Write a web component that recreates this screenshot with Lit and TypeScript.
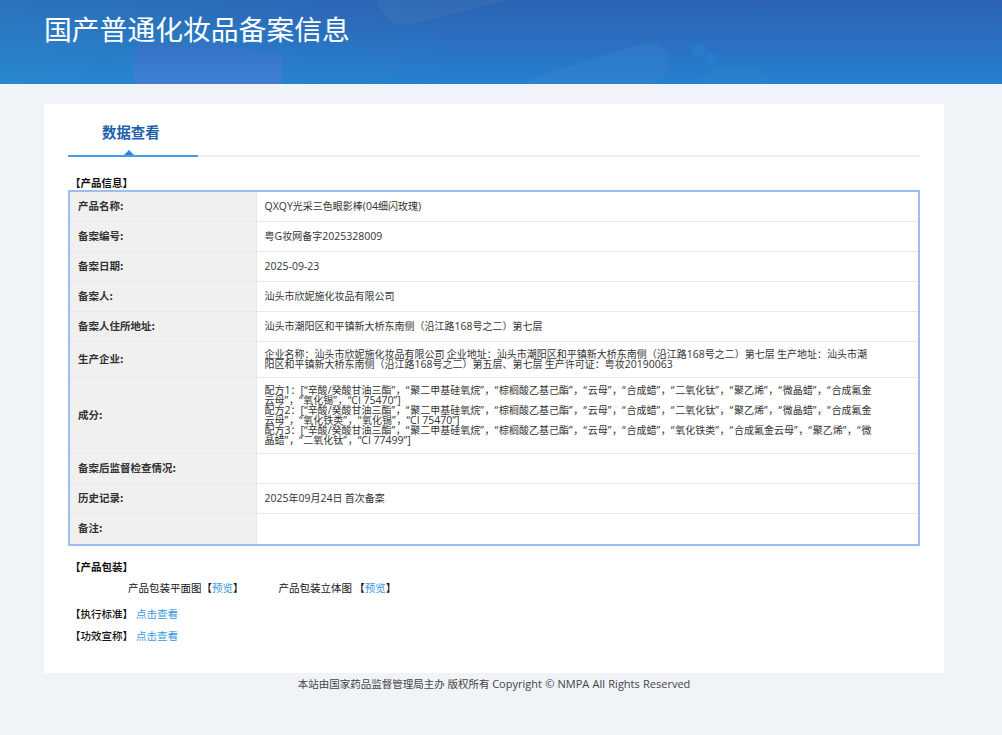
import { css, html, LitElement } from "lit";
import { customElement } from "lit/decorators.js";

// latin runs get their own slightly larger face, the way the page mixes fonts
const mix = (text: string) =>
	text
		.split(/([\x21-\x7e©“”](?:[\x20-\x7e©“”]*[\x21-\x7e©“”])?)/)
		.map((part, i) =>
			i % 2
				? html`<span class="en ${/^[“”]$/.test(part) ? "quote" : ""}">${part}</span>`
				: part,
		);

const formula = (n: number, items: string[]) =>
	`配方${n}\uff1a[${items.map((item) => `“${item}”`).join("\uff0c")}]`;

const base = ["辛酸/癸酸甘油三酯", "聚二甲基硅氧烷", "棕榈酸乙基己酯", "云母", "合成蜡"];

const road = "汕头市潮阳区和平镇新大桥东南侧\uff08沿江路168号之二\uff09";

const rows: { label: string; value: unknown; cls?: string }[] = [
	{ label: "产品名称:", value: mix("QXQY光采三色眼影棒(04细闪玫瑰)") },
	{ label: "备案编号:", value: mix("粤G妆网备字2025328009") },
	{ label: "备案日期:", value: mix("2025-09-23") },
	{ label: "备案人:", value: "汕头市欣妮施化妆品有限公司" },
	{ label: "备案人住所地址:", value: mix(`${road}第七层`) },
	{
		label: "生产企业:",
		cls: "tall",
		value: mix(
			`企业名称\uff1a汕头市欣妮施化妆品有限公司 企业地址\uff1a${road}第七层 生产地址\uff1a${road}第五层、第七层 生产许可证\uff1a粤妆20190063`,
		),
	},
	{
		label: "成分:",
		cls: "tall",
		value: html`${mix(
				formula(1, [...base, "二氧化钛", "聚乙烯", "微晶蜡", "合成氟金云母", "氧化锡", "CI 75470"]),
			)}<br />${mix(
				formula(2, [...base, "二氧化钛", "聚乙烯", "微晶蜡", "合成氟金云母", "氧化铁类", "氧化锡", "CI 75470"]),
			)}<br />${mix(
				formula(3, [...base, "氧化铁类", "合成氟金云母", "聚乙烯", "微晶蜡", "二氧化钛", "CI 77499"]),
			)}`,
	},
	{ label: "备案后监督检查情况:", value: "" },
	{ label: "历史记录:", value: mix("2025年09月24日 首次备案") },
	{ label: "备注:", value: "" },
];

@customElement("app-root")
export class AppRoot extends LitElement {
	static override styles = css`
		:host {
			display: block;
			min-height: 735px;
			background: #f0f3f7;
			font-family: "Noto Sans CJK SC", "Open Sans", sans-serif;
			font-size: 10px;
			color: #333;
		}

		.en {
			font-family: "Open Sans", "Noto Sans CJK SC", sans-serif;
			font-size: 10.5px;
		}

		.quote {
			letter-spacing: 0.7px;
		}

		td .en {
			line-height: 0;
		}

		.banner {
			position: relative;
			height: 84px;
			overflow: hidden;
			background:
				linear-gradient(to right, rgba(38, 150, 205, 0.35), rgba(38, 150, 205, 0) 45%),
				linear-gradient(to bottom, #2c61b2, #287fd0);
		}

		.banner h1 {
			position: relative;
			margin: 0;
			padding: 11px 0 0 44px;
			font-size: 27.8px;
			line-height: 34px;
			font-weight: 400;
			color: #fff;
		}

		.shape {
			position: absolute;
		}

		.shape.block {
			left: 134px;
			top: 43px;
			width: 148px;
			height: 41px;
			background: linear-gradient(to bottom, #3473c4, #3c80d6);
			clip-path: polygon(0 0, 55% 0, 100% 30%, 100% 100%, 0 100%);
		}

		.shape.pill {
			left: 375px;
			top: -46px;
			width: 150px;
			height: 60px;
			border-radius: 30px;
			background: rgba(80, 140, 190, 0.2);
			transform: rotate(-14deg);
		}

		.shape.wave {
			left: 521px;
			top: 59px;
			width: 150px;
			height: 40px;
			border-radius: 20px;
			background: rgba(70, 150, 220, 0.18);
			transform: rotate(-17deg);
		}

		.shape.glow {
			left: 696px;
			top: 67px;
			width: 78px;
			height: 40px;
			border-radius: 50%;
			background: rgba(70, 150, 220, 0.07);
		}

		.shape.dot {
			left: 692px;
			top: 44px;
			width: 13px;
			height: 13px;
			border-radius: 50%;
			background: rgba(50, 140, 225, 0.3);
		}

		.shape.dot.small {
			left: 706px;
			top: 53px;
			width: 9px;
			height: 9px;
			background: rgba(40, 130, 225, 0.5);
		}

		.card {
			width: 852px;
			height: 569px;
			margin: 20px 0 0 44px;
			padding: 0 24px;
			background: #fff;
		}

		.tabs {
			position: relative;
			height: 51px;
			border-bottom: 2px solid #ebedf0;
		}

		.tab {
			position: absolute;
			left: 0;
			bottom: -2px;
			box-sizing: border-box;
			width: 130px;
			height: 53px;
			padding: 19px 0 0 34px;
			border-bottom: 2px solid #439ce4;
			font-size: 14.4px;
			line-height: 18px;
			font-weight: 700;
			color: #1d62a8;
		}

		.tab::after {
			content: "";
			position: absolute;
			left: 56px;
			bottom: 0;
			border: 5px solid transparent;
			border-top: 0;
			border-bottom-color: #2a86d6;
		}

		.heading {
			margin: 0;
			padding-left: 2px;
			font-size: 10.5px;
			line-height: 12px;
			font-weight: 700;
			color: #111;
		}

		.first {
			margin-top: 20px;
		}

		table {
			box-sizing: border-box;
			width: 852px;
			margin-top: 1px;
			border: 2px solid #9dbfee;
			border-collapse: collapse;
			table-layout: fixed;
		}

		tr + tr th,
		tr + tr td {
			border-top: 1px solid #e6e8eb;
		}

		th,
		td {
			box-sizing: border-box;
			height: 30px;
			padding: 0 0 1px;
			font-size: 10px;
			line-height: 10px;
		}

		tr:last-child th,
		tr:last-child td {
			height: 32px;
		}

		th {
			width: 187px;
			padding-left: 8px;
			border-right: 1px solid #e6e8eb;
			background: #f0f0f0;
			text-align: left;
			font-size: 10.5px;
			font-weight: 700;
			color: #333;
		}

		td {
			padding-left: 8px;
			padding-right: 45px;
		}

		.tall td {
			height: auto;
			padding-top: 7px;
			padding-bottom: 8px;
		}

		.package {
			margin-top: 15px;
		}

		.previews {
			display: flex;
			gap: 35px;
			padding: 8px 0 0 60px;
			font-size: 10.5px;
			line-height: 14px;
			color: #111;
		}

		.line {
			display: flex;
			gap: 3px;
			margin-top: 8px;
			font-size: 10.5px;
			line-height: 14px;
		}

		.previews + .line {
			margin-top: 12px;
		}

		.line .heading {
			line-height: 14px;
			font-weight: 500;
		}

		a {
			color: #3a97e0;
			text-decoration: none;
		}

		.foot {
			width: 900px;
			margin-left: 44px;
			padding-top: 4px;
			text-align: center;
			font-size: 10.5px;
			line-height: 14px;
			word-spacing: 0.4px;
			color: #444;
		}

		.foot .en {
			font-size: 11px;
		}
	`;

	override render() {
		return html`
			<div class="banner">
				<div class="shape block"></div>
				<div class="shape pill"></div>
				<div class="shape wave"></div>
				<div class="shape glow"></div>
				<div class="shape dot"></div>
				<div class="shape dot small"></div>
				<h1>国产普通化妆品备案信息</h1>
			</div>
			<div class="card">
				<div class="tabs"><div class="tab">数据查看</div></div>
				<p class="heading first">【产品信息】</p>
				<table>
					${rows.map(
						(row) => html`
							<tr class=${row.cls ?? ""}>
								<th>${row.label}</th>
								<td>${row.value}</td>
							</tr>
						`,
					)}
				</table>
				<p class="heading package">【产品包装】</p>
				<div class="previews">
					<span>产品包装平面图【<a href="#">预览</a>】</span>
					<span>产品包装立体图 【<a href="#">预览</a>】</span>
				</div>
				<div class="line">
					<p class="heading">【执行标准】</p>
					<a href="#">点击查看</a>
				</div>
				<div class="line">
					<p class="heading">【功效宣称】</p>
					<a href="#">点击查看</a>
				</div>
			</div>
			<div class="foot">本站由国家药品监督管理局主办 版权所有 <span class="en">Copyright © NMPA All Rights Reserved</span></div>
		`;
	}
}
